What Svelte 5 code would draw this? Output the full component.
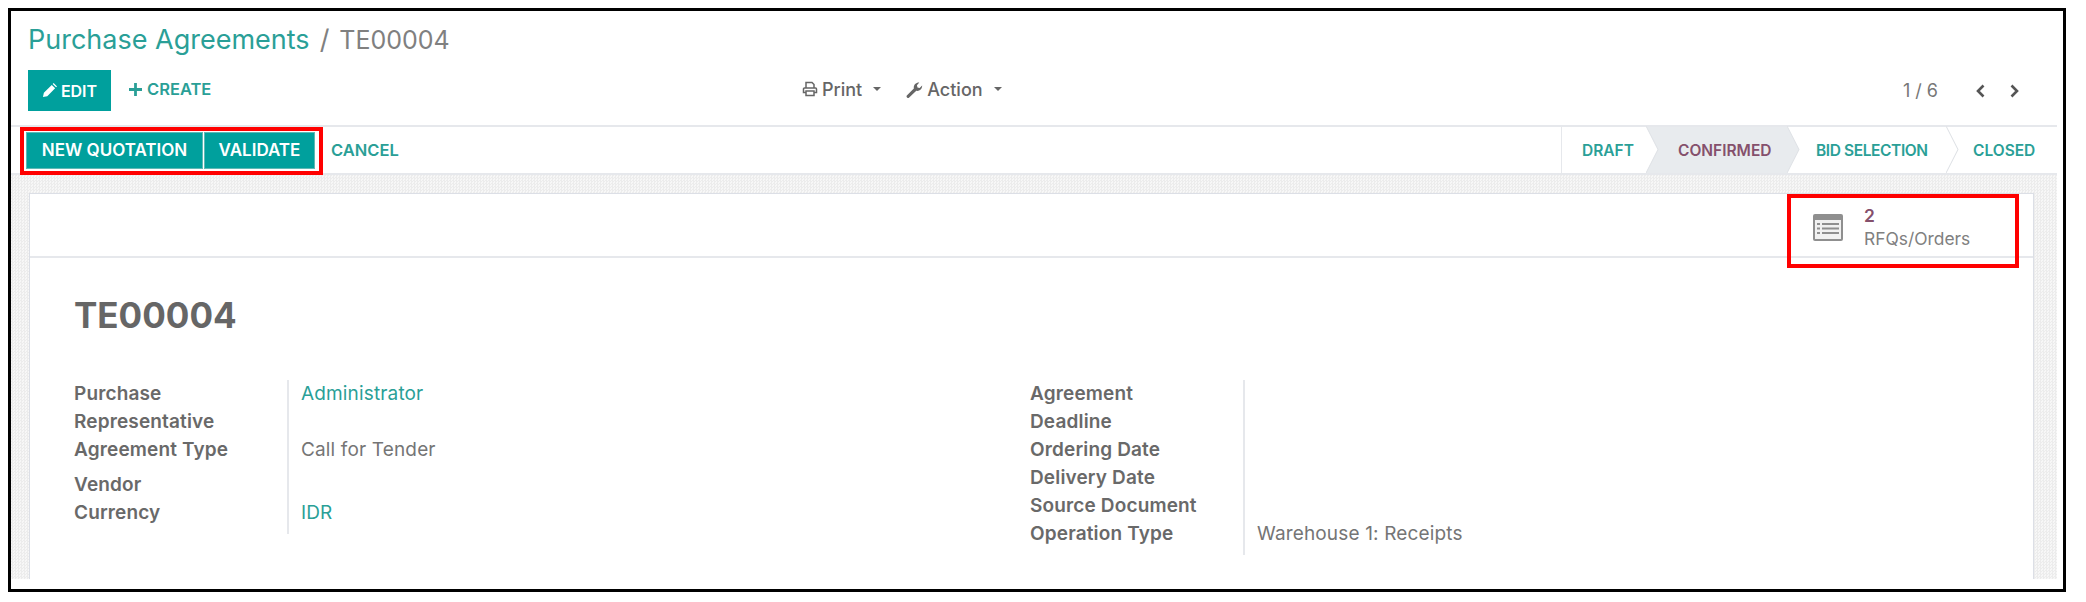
<script>
	const leftRows = [
		{ label: 'Purchase', value: 'Administrator', link: true },
		{ label: 'Representative' },
		{ label: 'Agreement Type', value: 'Call for Tender' },
		{ label: 'Vendor', tall: true },
		{ label: 'Currency', value: 'IDR', link: true }
	];
	const rightRows = [
		{ label: 'Agreement' },
		{ label: 'Deadline' },
		{ label: 'Ordering Date' },
		{ label: 'Delivery Date' },
		{ label: 'Source Document' },
		{ label: 'Operation Type', value: 'Warehouse 1: Receipts' }
	];
	const steps = [
		{ name: 'DRAFT', cls: 'draft' },
		{ name: 'CONFIRMED', cls: 'confirmed' },
		{ name: 'BID SELECTION', cls: 'bid' },
		{ name: 'CLOSED', cls: 'closed' }
	];
</script>

<div class="frame">
	<header class="head">
		<h1 class="crumbs"><span class="link">Purchase Agreements</span><span class="slash">/</span><span class="current">TE00004</span></h1>
		<div class="toolbar">
			<div class="tools-left">
				<button class="btn edit">
					<svg viewBox="0 0 16 16" width="15" height="15"><path fill="currentColor" d="M1 15l1-4.600L10.400 2l3.600 3.600L5.600 14zM11.400 1l1-1 3.600 3.600-1 1z" /></svg>
					EDIT
				</button>
				<button class="create lifted">
					<svg viewBox="0 0 14 14" width="13" height="13"><path fill="currentColor" d="M5.500 0h3v5.500H14v3H8.500V14h-3V8.500H0v-3h5.500z" /></svg>
					CREATE
				</button>
			</div>
			<div class="tools-mid">
				<span class="drop">
					<svg viewBox="0 0 16 16" width="16" height="16"><path fill="none" stroke="currentColor" stroke-width="1.500" d="M4 7V1.500h6l2 2V7M4 11.500H1.500V8a1 1 0 0 1 1-1h11a1 1 0 0 1 1 1v3.500H12M4 10h8v4.500H4z" /></svg>
					Print<i class="caret"></i>
				</span>
				<span class="drop">
					<svg viewBox="0 0 16 16" width="17" height="17"><path fill="currentColor" d="M1 13.500L7.400 7.100C6.900 4.500 8.600 1.500 12.500 1.500L10.300 4l.5 2 2 .5 2.400-2.300c.2 3.500-2.700 5.600-5.500 5L3 15.500a1.400 1.400 0 0 1-2-2z" /></svg>
					Action<i class="caret"></i>
				</span>
			</div>
			<div class="pager">
				<span class="count">1 / 6</span>
				<svg viewBox="0 0 10 14" width="11" height="14"><path fill="none" stroke="currentColor" stroke-width="2.600" d="M8 1.500L2.500 7 8 12.500" /></svg>
				<svg viewBox="0 0 10 14" width="11" height="14"><path fill="none" stroke="currentColor" stroke-width="2.600" d="M2 1.500L7.500 7 2 12.500" /></svg>
			</div>
		</div>
	</header>

	<div class="statusbar">
		<div class="actions">
			<button class="btn action quote">NEW QUOTATION</button>
			<button class="btn action">VALIDATE</button>
			<button class="create cancel">CANCEL</button>
		</div>
		<div class="steps">
			{#each steps as s, i}
				<div class="step {s.cls}">
					{s.name}
					{#if i < steps.length - 1}
						<svg class="chev" viewBox="0 0 13 46" width="13" height="47" preserveAspectRatio="none">
							<path d="M0 0L12 23 0 46" fill={s.cls === 'confirmed' ? '#e8ebee' : '#fff'} stroke="#dfe2e6" />
						</svg>
					{/if}
				</div>
			{/each}
		</div>
		<div class="mark mark-actions"></div>
	</div>

	<main class="sheet-bg">
		<section class="sheet">
			<div class="stat-row">
				<div class="stat">
					<svg viewBox="0 0 30 27" width="30" height="27">
						<path fill="#8f8f8f" d="M2 0h26a2 2 0 0 1 2 2v23a2 2 0 0 1-2 2H2a2 2 0 0 1-2-2V2a2 2 0 0 1 2-2z" />
						<rect x="2" y="6" width="26" height="19" fill="#f1f1f1" />
						<path fill="#8f8f8f" d="M4 9h3v2H4zM9 9h17v2H9zM4 13.500h3v2H4zM9 13.500h17v2H9zM4 18h3v2H4zM9 18h17v2H9z" />
					</svg>
					<div class="stat-text">
						<span class="stat-num">2</span>
						<span>RFQs/Orders</span>
					</div>
				</div>
				<div class="mark mark-stat"></div>
			</div>
			<div class="body">
				<h2 class="doc-name">TE00004</h2>
				<div class="groups">
					<div class="group">
						{#each leftRows as r}
							<div class="label" class:tall={r.tall}>{r.label}</div>
							<div class="value" class:link={r.link}>{r.value ?? ''}</div>
						{/each}
					</div>
					<div class="group">
						{#each rightRows as r}
							<div class="label">{r.label}</div>
							<div class="value">{r.value ?? ''}</div>
						{/each}
					</div>
				</div>
			</div>
		</section>
	</main>
</div>

<style>
	:global(body) {
		background: #fff;
	}
	.frame {
		box-sizing: border-box;
		width: 2058px;
		height: 584px;
		margin: 8px 0 0 8px;
		border: 3px solid #000;
		display: flex;
		flex-direction: column;
		font-family: Inter, 'Noto Sans', sans-serif;
		color: #666;
		font-size: 18px;
		padding-right: 6px;
	}
	button {
		font: inherit;
		border: 0;
		background: none;
		padding: 0;
	}
	.link {
		color: #2a9f97;
	}
	.head {
		padding-left: 17px;
		height: 116px;
		box-sizing: border-box;
		border-bottom: 2px solid #e6e8ec;
	}
	.crumbs {
		margin: 0;
		padding-top: 11px;
		font-size: 27px;
		line-height: 36px;
		font-weight: 400;
		color: #808080;
		display: flex;
		align-items: baseline;
		gap: 10px;
	}
	.current {
		font-size: 25px;
	}
	.toolbar {
		display: grid;
		grid-template-columns: 774px auto 1fr;
		align-items: center;
		margin-top: 12px;
		padding-right: 37px;
	}
	.tools-left {
		display: flex;
		align-items: center;
		gap: 18px;
	}
	.btn {
		background: #00a09d;
		color: #fff;
		font-weight: 600;
		font-size: 17px;
		display: inline-flex;
		align-items: center;
		justify-content: center;
	}
	.edit {
		width: 83px;
		height: 41px;
		gap: 4px;
		font-size: 16px;
	}
	.create {
		color: #2a9f97;
		font-weight: 600;
		font-size: 16.500px;
		display: inline-flex;
		align-items: center;
		gap: 5px;
	}
	.lifted {
		margin-bottom: 3px;
	}
	.tools-mid {
		display: flex;
		gap: 25px;
		margin-bottom: 3px;
		font-weight: 500;
		color: #666;
	}
	.drop {
		display: inline-flex;
		align-items: center;
		gap: 4px;
	}
	.caret {
		width: 0;
		height: 0;
		margin-left: 7px;
		border: 4px solid transparent;
		border-top-color: #666;
		border-bottom: 0;
	}
	.pager {
		justify-self: end;
		display: flex;
		align-items: center;
		gap: 23px;
		color: #555;
	}
	.count {
		color: #777;
		margin-right: 14px;
		font-size: 18px;
	}
	.statusbar {
		position: relative;
		display: flex;
		justify-content: space-between;
		height: 48px;
		box-sizing: border-box;
		border-bottom: 2px solid #e6e8ec;
	}
	.actions {
		display: flex;
		align-items: center;
		padding-left: 15px;
	}
	.action {
		height: 37px;
		width: 111px;
		box-shadow: inset 0 0 0 1px #5fb9b5;
	}
	.quote {
		width: 177px;
		margin-right: 1px;
	}
	.cancel {
		margin-left: 16px;
	}
	.steps {
		display: flex;
		border-left: 1px solid #e6e8ec;
	}
	.step {
		position: relative;
		display: flex;
		align-items: center;
		font-size: 15.500px;
		font-weight: 600;
		color: #2a9f97;
	}
	.draft {
		width: 84px;
		padding-left: 20px;
		box-sizing: border-box;
	}
	.confirmed {
		width: 141px;
		padding-left: 32px;
		box-sizing: border-box;
		background: #e8ebee;
		color: #85506c;
	}
	.bid {
		width: 159px;
		padding-left: 29px;
		box-sizing: border-box;
		letter-spacing: -0.4px;
	}
	.closed {
		width: 111px;
		padding-left: 27px;
		box-sizing: border-box;
	}
	.chev {
		position: absolute;
		top: -1px;
		left: 100%;
		z-index: 1;
	}
	.sheet-bg {
		flex: 1;
		margin-bottom: 10px;
		padding: 18px 23px 0 18px;
		background: repeating-conic-gradient(#ececec 0 25%, #f7f7f7 0 50%) 0 0 / 3px 3px;
		display: flex;
	}
	.sheet {
		flex: 1;
		background: #fff;
		border: 1px solid #dcdfe6;
		border-bottom: 0;
	}
	.stat-row {
		position: relative;
		height: 62px;
		display: flex;
		justify-content: flex-end;
		border-bottom: 2px solid #e6e8ec;
	}
	.stat {
		width: 220px;
		display: flex;
		align-items: center;
		gap: 21px;
		font-size: 17.400px;
		line-height: 23px;
		color: #808080;
		padding-top: 4px;
		box-sizing: border-box;
	}
	.stat-text {
		display: flex;
		flex-direction: column;
	}
	.stat-num {
		color: #85506c;
		font-weight: 600;
	}
	.mark {
		position: absolute;
		box-sizing: border-box;
		border: 4px solid #f00;
		pointer-events: none;
	}
	.mark-actions {
		left: 9px;
		top: 0;
		width: 303px;
		height: 48px;
	}
	.mark-stat {
		right: 14px;
		top: 0;
		width: 232px;
		height: 74px;
		z-index: 2;
	}
	.body {
		padding: 35px 44px 0;
	}
	.doc-name {
		margin: 0;
		font-size: 35px;
		line-height: 44px;
		font-weight: 700;
		color: #666;
	}
	.groups {
		display: grid;
		grid-template-columns: 956px 1fr;
		margin-top: 43px;
	}
	.group {
		display: grid;
		grid-template-columns: 213px 1fr;
		align-self: start;
		line-height: 28px;
		font-size: 19px;
		letter-spacing: 0.15px;
	}
	.label {
		font-weight: 600;
		color: #696969;
	}
	.value {
		border-left: 2px solid #e6e8ec;
		padding-left: 12px;
		color: #757575;
	}
	.value:last-child {
		padding-bottom: 7px;
	}
	.value.link {
		color: #2a9f97;
	}
	.tall {
		margin-top: 7px;
	}
</style>
